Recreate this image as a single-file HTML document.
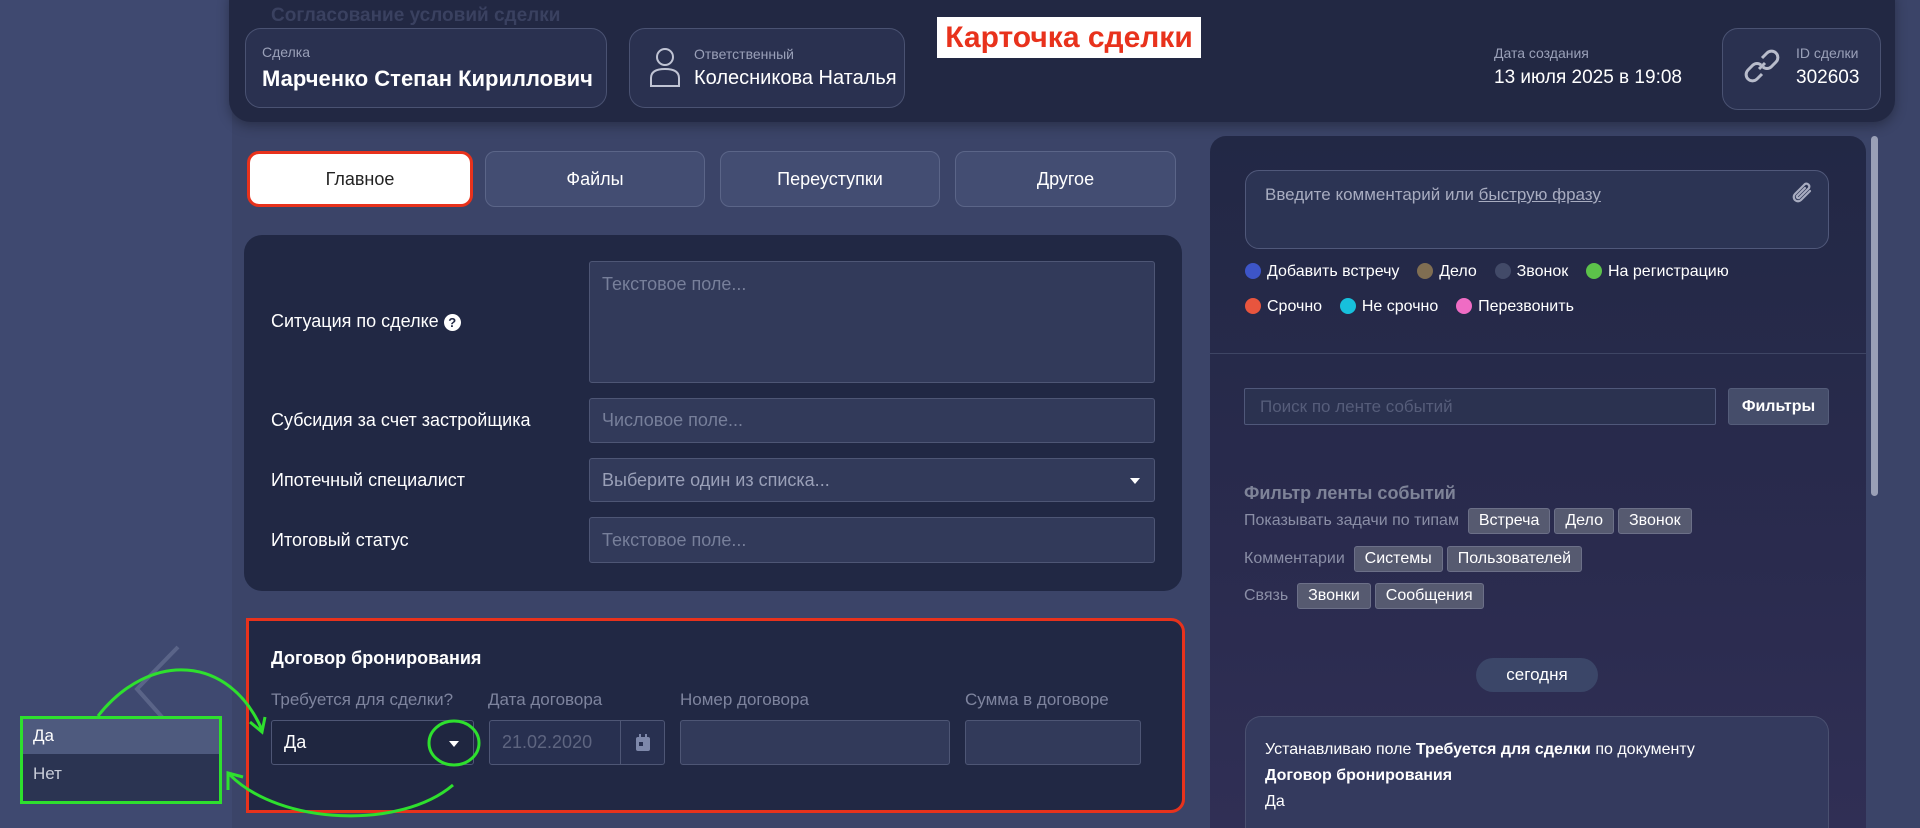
<!DOCTYPE html>
<html style="width:1920px;height:828px;overflow:hidden"><head><meta charset="utf-8"><style>
*{box-sizing:border-box;margin:0;padding:0}
body{width:1920px;height:828px;overflow:hidden;background:#3b4468;font-family:"Liberation Sans",sans-serif;color:#fff;position:relative}
.a{position:absolute}
.leftbg{left:0;top:0;width:232px;height:828px;background:#3f4970}
.hdr{left:229px;top:-20px;width:1666px;height:142px;background:#222843;border-radius:22px;box-shadow:0 4px 12px rgba(0,0,0,.3)}
.box{border:1px solid #4a5272;border-radius:16px;background:#2a3150}
.lbl{font-size:14px;color:#9aa0b8}
.tab{top:151px;height:56px;border:1px solid #5b6588;border-radius:10px;background:#434d72;font-size:18px;display:flex;align-items:center;justify-content:center;color:#fff}
.panel{background:#212844;border-radius:18px}
.inp{background:#323a5a;border:1px solid #4e5675;border-radius:3px;font-size:18px;color:#777f9a;padding:0 12px;display:flex;align-items:center}
.flbl{font-size:18px;color:#fff;left:271px}
.rp{left:1210px;top:136px;width:656px;height:692px;background:linear-gradient(180deg,#222845 0%,#2a2b4e 60%,#302f55 100%);border-radius:16px 16px 0 0}
.dot{display:inline-block;width:16px;height:16px;border-radius:50%;vertical-align:-3px;margin-right:6px}
.rt{font-size:16px;color:#fff}
.chip{display:inline-block;background:#565a70;border:1px solid #6c7088;border-radius:3px;padding:3px 10px;font-size:16px;color:#fff;margin-right:4px}
.gl{font-size:16px;color:#8a8ea6}
</style></head><body>
<div class="a leftbg"></div>
<div class="a hdr"></div>
<div class="a" style="left:271px;top:5px;font-size:19px;font-weight:bold;color:#3a4160">Согласование условий сделки</div>
<div class="a box" style="left:245px;top:28px;width:362px;height:80px"></div>
<div class="a lbl" style="left:262px;top:44px">Сделка</div>
<div class="a" style="left:262px;top:66px;font-size:22px;font-weight:bold">Марченко Степан Кириллович</div>
<div class="a box" style="left:629px;top:28px;width:276px;height:80px"></div>
<svg class="a" style="left:648px;top:46px" width="34" height="42" viewBox="0 0 34 42" fill="none" stroke="#c0c4d4" stroke-width="2"><circle cx="17" cy="11" r="8"/><path d="M3 40V32c0-6 5-9 14-9s14 3 14 9v8z"/></svg>
<div class="a lbl" style="left:694px;top:46px">Ответственный</div>
<div class="a" style="left:694px;top:67px;font-size:20px">Колесникова Наталья</div>
<div class="a" style="left:937px;top:17px;width:264px;height:41px;background:#fff;color:#e8321c;font-size:30px;font-weight:bold;display:flex;align-items:center;justify-content:center">Карточка сделки</div>
<div class="a lbl" style="left:1494px;top:45px">Дата создания</div>
<div class="a" style="left:1494px;top:67px;font-size:19px">13 июля 2025 в 19:08</div>
<div class="a box" style="left:1722px;top:28px;width:159px;height:82px"></div>
<svg class="a" style="left:1742px;top:46px" width="40" height="40" viewBox="0 0 40 40" fill="none" stroke="#b8bccb" stroke-width="3"><path d="M17 23l6-6"/><path d="M20 12l5-5a6 6 0 0 1 9 9l-5 5a6 6 0 0 1-8 0"/><path d="M20 28l-5 5a6 6 0 0 1-9-9l5-5a6 6 0 0 1 8 0"/></svg>
<div class="a lbl" style="left:1796px;top:45px">ID сделки</div>
<div class="a" style="left:1796px;top:67px;font-size:19px">302603</div>

<div class="a tab" style="left:247px;width:226px;background:#fff;color:#222;border:3px solid #e8321c;border-radius:12px">Главное</div>
<div class="a tab" style="left:485px;width:220px">Файлы</div>
<div class="a tab" style="left:720px;width:220px">Переуступки</div>
<div class="a tab" style="left:955px;width:221px">Другое</div>

<div class="a panel" style="left:244px;top:235px;width:938px;height:356px"></div>
<div class="a flbl" style="top:311px">Ситуация по сделке <span style="display:inline-block;width:17px;height:17px;border-radius:50%;background:#fff;color:#212844;font-size:13px;font-weight:bold;text-align:center;line-height:17px">?</span></div>
<div class="a inp" style="left:589px;top:261px;width:566px;height:122px;align-items:flex-start;padding-top:12px">Текстовое поле...</div>
<div class="a flbl" style="top:410px">Субсидия за счет застройщика</div>
<div class="a inp" style="left:589px;top:398px;width:566px;height:45px">Числовое поле...</div>
<div class="a flbl" style="top:470px">Ипотечный специалист</div>
<div class="a inp" style="left:589px;top:458px;width:566px;height:44px;color:#9aa0b8">Выберите один из списка...<span style="position:absolute;right:14px;top:19px;border:5px solid transparent;border-top:6px solid #fff"></span></div>
<div class="a flbl" style="top:530px">Итоговый статус</div>
<div class="a inp" style="left:589px;top:517px;width:566px;height:46px">Текстовое поле...</div>

<div class="a" style="left:246px;top:618px;width:939px;height:195px;border:3px solid #e8321c;background:#212844;border-radius:0 14px 14px 0"></div>
<div class="a" style="left:271px;top:648px;font-size:18px;font-weight:bold">Договор бронирования</div>
<div class="a" style="left:271px;top:690px;font-size:17px;color:#7e849e">Требуется для сделки?</div>
<div class="a" style="left:488px;top:690px;font-size:17px;color:#7e849e">Дата договора</div>
<div class="a" style="left:680px;top:690px;font-size:17px;color:#7e849e">Номер договора</div>
<div class="a" style="left:965px;top:690px;font-size:17px;color:#7e849e">Сумма в договоре</div>
<div class="a inp" style="left:271px;top:720px;width:203px;height:45px;background:#1f2640;color:#fff">Да<span style="position:absolute;right:14px;top:20px;border:5px solid transparent;border-top:6px solid #fff"></span></div>
<div class="a inp" style="left:489px;top:720px;width:176px;height:45px;color:#5e6580;background:#283050">21.02.2020<span style="position:absolute;left:130px;top:0;width:1px;height:43px;background:#4e5675"></span><svg style="position:absolute;left:145px;top:13px" width="16" height="18" viewBox="0 0 16 18"><rect x="1" y="3" width="14" height="14" rx="2" fill="#7e88aa"/><rect x="4" y="0" width="2" height="4" fill="#7e88aa"/><rect x="10" y="0" width="2" height="4" fill="#7e88aa"/><rect x="4" y="8" width="4" height="4" fill="#283050"/></svg></div>
<div class="a inp" style="left:680px;top:720px;width:270px;height:45px"></div>
<div class="a inp" style="left:965px;top:720px;width:176px;height:45px"></div>

<svg class="a" style="left:0;top:600px" width="500" height="228" viewBox="0 0 500 228" fill="none">
<path d="M178 47 L137 89 L178 135" stroke="#5a6488" stroke-width="4"/></svg>
<div class="a" style="left:20px;top:716px;width:202px;height:88px;border:3px solid #2ee02e;background:#2b3452">
<div style="height:35px;background:#4e5a7e;font-size:17px;padding:7px 10px">Да</div>
<div style="font-size:17px;padding:10px 10px;color:#c8ccd8">Нет</div></div>
<svg class="a" style="left:0;top:600px" width="500" height="228" viewBox="0 0 500 228" fill="none" stroke="#2ee02e" stroke-width="3">
<path d="M98 116 C150 50 230 55 262 130"/><path d="M250 122l12 10 3-15"/>
<path d="M453 185 C400 230 280 225 230 175"/><path d="M228 190l0-17 15 4"/>
<ellipse cx="454" cy="143" rx="25" ry="22"/></svg>

<div class="a rp"></div>
<div class="a" style="left:1871px;top:136px;width:7px;height:360px;background:#9aa0b6;border-radius:4px"></div>
<div class="a" style="left:1245px;top:170px;width:584px;height:79px;border:1px solid #50587a;border-radius:14px;background:#2c3454"></div>
<div class="a" style="left:1265px;top:185px;font-size:17px;color:#a8acc0">Введите комментарий или <span style="text-decoration:underline">быструю фразу</span></div>
<svg class="a" style="left:1790px;top:180px" width="26" height="28" viewBox="0 0 26 28" fill="none" stroke="#a8acc0" stroke-width="2.2" stroke-linecap="round"><path d="M20 11L11 20a4 4 0 0 1-6-6L15 4a3 3 0 0 1 4 4L9 18a1.5 1.5 0 0 1-2-2l8-8"/></svg>
<div class="a rt" style="left:1245px;top:263px"><span class="dot" style="background:#3d55c8"></span>Добавить встречу &nbsp;&nbsp; <span class="dot" style="background:#806e52"></span>Дело &nbsp;&nbsp; <span class="dot" style="background:#424a68"></span>Звонок &nbsp;&nbsp; <span class="dot" style="background:#5cc24a"></span>На регистрацию</div>
<div class="a rt" style="left:1245px;top:298px"><span class="dot" style="background:#e8553e"></span>Срочно &nbsp;&nbsp; <span class="dot" style="background:#17c0dc"></span>Не срочно &nbsp;&nbsp; <span class="dot" style="background:#ef6cc4"></span>Перезвонить</div>
<div class="a" style="left:1210px;top:353px;width:656px;height:1px;background:#3e4564"></div>
<div class="a" style="left:1244px;top:388px;width:472px;height:37px;border:1px solid #50587a;background:#2b3250;border-radius:2px;font-size:17px;color:#565d7a;padding:8px 15px">Поиск по ленте событий</div>
<div class="a" style="left:1728px;top:388px;width:101px;height:37px;background:#454d6a;border:1px solid #555d7a;border-radius:3px;font-size:16px;font-weight:bold;text-align:center;line-height:35px">Фильтры</div>
<div class="a" style="left:1244px;top:483px;font-size:18px;font-weight:bold;color:#7e8398">Фильтр ленты событий</div>
<div class="a" style="left:1244px;top:508px"><span class="gl">Показывать задачи по типам</span> &nbsp;<span class="chip">Встреча</span><span class="chip">Дело</span><span class="chip">Звонок</span></div>
<div class="a" style="left:1244px;top:546px"><span class="gl">Комментарии</span> &nbsp;<span class="chip">Системы</span><span class="chip">Пользователей</span></div>
<div class="a" style="left:1244px;top:583px"><span class="gl">Связь</span> &nbsp;<span class="chip">Звонки</span><span class="chip">Сообщения</span></div>
<div class="a" style="left:1476px;top:658px;width:122px;height:34px;border-radius:17px;background:#3b4668;font-size:17px;text-align:center;line-height:34px">сегодня</div>
<div class="a" style="left:1245px;top:716px;width:584px;height:112px;border:1px solid #4a5070;border-bottom:none;border-radius:16px 16px 0 0;background:#343a5e"></div>
<div class="a" style="left:1265px;top:737px;font-size:16px;line-height:26px">Устанавливаю поле <b>Требуется для сделки</b> по документу<br><b>Договор бронирования</b><br>Да</div>
</body></html>
